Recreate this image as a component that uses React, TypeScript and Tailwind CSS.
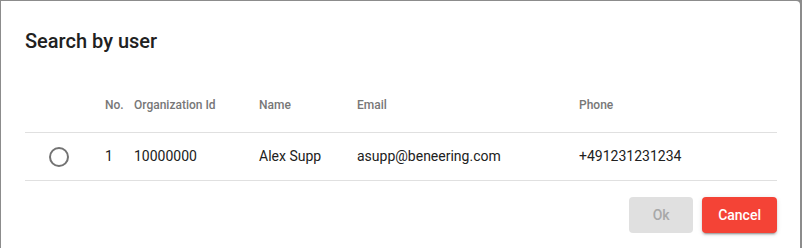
import { useState } from 'react'

const users = [
    { no: 1, orgId: '10000000', name: 'Alex Supp', email: 'asupp@beneering.com', phone: '+491231231234' },
]

function App() {
    const [selected, setSelected] = useState<number | null>(null)
    return (
        <div className="w-[802px] h-[248px] overflow-hidden bg-[#8c8c8c] pt-px pl-px pr-[2px] font-['Roboto',sans-serif]">
            <div className="bg-white rounded-tr-[4px] h-[270px] pl-6 pr-[23px] pt-6">
                <h2 className="text-[20px] leading-8 font-medium text-[#212121] mb-5">Search by user</h2>
                <div className="grid grid-cols-[80px_29px_125px_98px_222px_1fr] h-[56px] items-center border-b border-[#e0e0e0] text-[12px] font-medium text-[#777777]">
                    <div />
                    <div>No.</div>
                    <div>Organization Id</div>
                    <div>Name</div>
                    <div>Email</div>
                    <div>Phone</div>
                </div>
                {users.map((u) => (
                    <div
                        key={u.no}
                        className="grid grid-cols-[80px_29px_125px_98px_222px_1fr] h-[48px] items-center border-b border-[#e0e0e0] text-[14px] text-[#212121]"
                    >
                        <div className="pl-6 flex items-center">
                            <button
                                onClick={() => setSelected(u.no)}
                                className="w-5 h-5 rounded-full border-2 border-[#737373] flex items-center justify-center"
                            >
                                {selected === u.no && <span className="w-2.5 h-2.5 rounded-full bg-[#f44336]" />}
                            </button>
                        </div>
                        <div>{u.no}</div>
                        <div>{u.orgId}</div>
                        <div>{u.name}</div>
                        <div>{u.email}</div>
                        <div>{u.phone}</div>
                    </div>
                ))}
                <div className="flex justify-end gap-[9px] pt-4">
                    <button
                        disabled={selected === null}
                        className="h-9 min-w-[64px] px-4 rounded-[4px] bg-[#e0e0e0] text-[14px] font-medium text-[#a8a8a8]"
                    >
                        Ok
                    </button>
                    <button className="h-9 min-w-[64px] px-4 rounded-[4px] bg-[#f44336] text-[14px] font-medium text-white shadow-[0_3px_1px_-2px_rgba(0,0,0,0.2),0_2px_2px_0_rgba(0,0,0,0.14),0_1px_5px_0_rgba(0,0,0,0.12)]">
                        Cancel
                    </button>
                </div>
            </div>
        </div>
    )
}

export default App
